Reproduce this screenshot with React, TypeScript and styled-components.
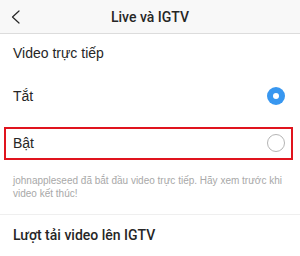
import React from "react";
import styled, { createGlobalStyle } from "styled-components";

const Global = createGlobalStyle`
  html, body { margin: 0; padding: 0; background: #ffffff; }
  body { font-family: "Liberation Sans", Arial, sans-serif; color: #262626; -webkit-font-smoothing: antialiased; }
`;

const Page = styled.div`
  width: 300px;
  height: 256px;
  overflow: hidden;
  background: #ffffff;
  display: flex;
  flex-direction: column;
`;

const Header = styled.div`
  height: 33px;
  flex: 0 0 33px;
  background: #f8f8f8;
  border-bottom: 1px solid #dcdcdc;
  display: grid;
  grid-template-columns: 40px 1fr 40px;
  align-items: center;
`;

const BackButton = styled.div`
  display: flex;
  align-items: center;
  padding-left: 11px;
  height: 100%;
`;

const Title = styled.div`
  text-align: center;
  font-family: Roboto, "Liberation Sans", Arial, sans-serif;
  font-size: 14px;
  font-weight: 500;
  color: #262626;
`;

const SectionTitle = styled.div<{ $h: number; $medium?: boolean }>`
  height: ${(p) => p.$h}px;
  padding: 0 13px;
  display: flex;
  align-items: center;
  font-size: 14px;
  ${(p) =>
    p.$medium &&
    `font-family: Roboto, "Liberation Sans", Arial, sans-serif; font-weight: 500;`}
  color: #262626;
`;

const Row = styled.div<{ $highlight?: boolean }>`
  position: relative;
  height: 47px;
  padding: 0 13px;
  display: flex;
  align-items: center;
  justify-content: space-between;
  font-size: 14px;
  color: #262626;
  ${(p) =>
    p.$highlight &&
    `
    &::after {
      content: "";
      position: absolute;
      left: 4px;
      right: 7px;
      top: 8px;
      height: 33px;
      box-sizing: border-box;
      border: 2px solid #e0141e;
      pointer-events: none;
    }
  `}
`;

const Radio = styled.div<{ $checked?: boolean }>`
  width: 18px;
  height: 18px;
  border-radius: 50%;
  box-sizing: border-box;
  margin-right: 2px;
  display: flex;
  align-items: center;
  justify-content: center;
  background: ${(p) => (p.$checked ? "#3897f0" : "#ffffff")};
  border: ${(p) => (p.$checked ? "none" : "1px solid #b5b5b5")};
  &::before {
    content: "";
    display: ${(p) => (p.$checked ? "block" : "none")};
    width: 6px;
    height: 6px;
    border-radius: 50%;
    background: #ffffff;
  }
`;

const Description = styled.div`
  padding: 8px 13px 14px;
  font-size: 10px;
  line-height: 13px;
  color: #a8a8a8;
  border-bottom: 1px solid #efefef;
`;

export default function App() {
  return (
    <Page>
      <Global />
      <Header>
        <BackButton>
          <svg width="9" height="14" viewBox="0 0 9 14">
            <path d="M8 1 L1.5 7 L8 13" fill="none" stroke="#262626" strokeWidth="1.2" strokeLinecap="round" strokeLinejoin="round" />
          </svg>
        </BackButton>
        <Title>Live và IGTV</Title>
        <div />
      </Header>
      <SectionTitle $h={38}>Video trực tiếp</SectionTitle>
      <Row>
        <span>Tắt</span>
        <Radio $checked />
      </Row>
      <Row $highlight>
        <span>Bật</span>
        <Radio />
      </Row>
      <Description>
        johnappleseed đã bắt đầu video trực tiếp. Hãy xem trước khi video kết thúc!
      </Description>
      <SectionTitle $h={40} $medium>Lượt tải video lên IGTV</SectionTitle>
    </Page>
  );
}
